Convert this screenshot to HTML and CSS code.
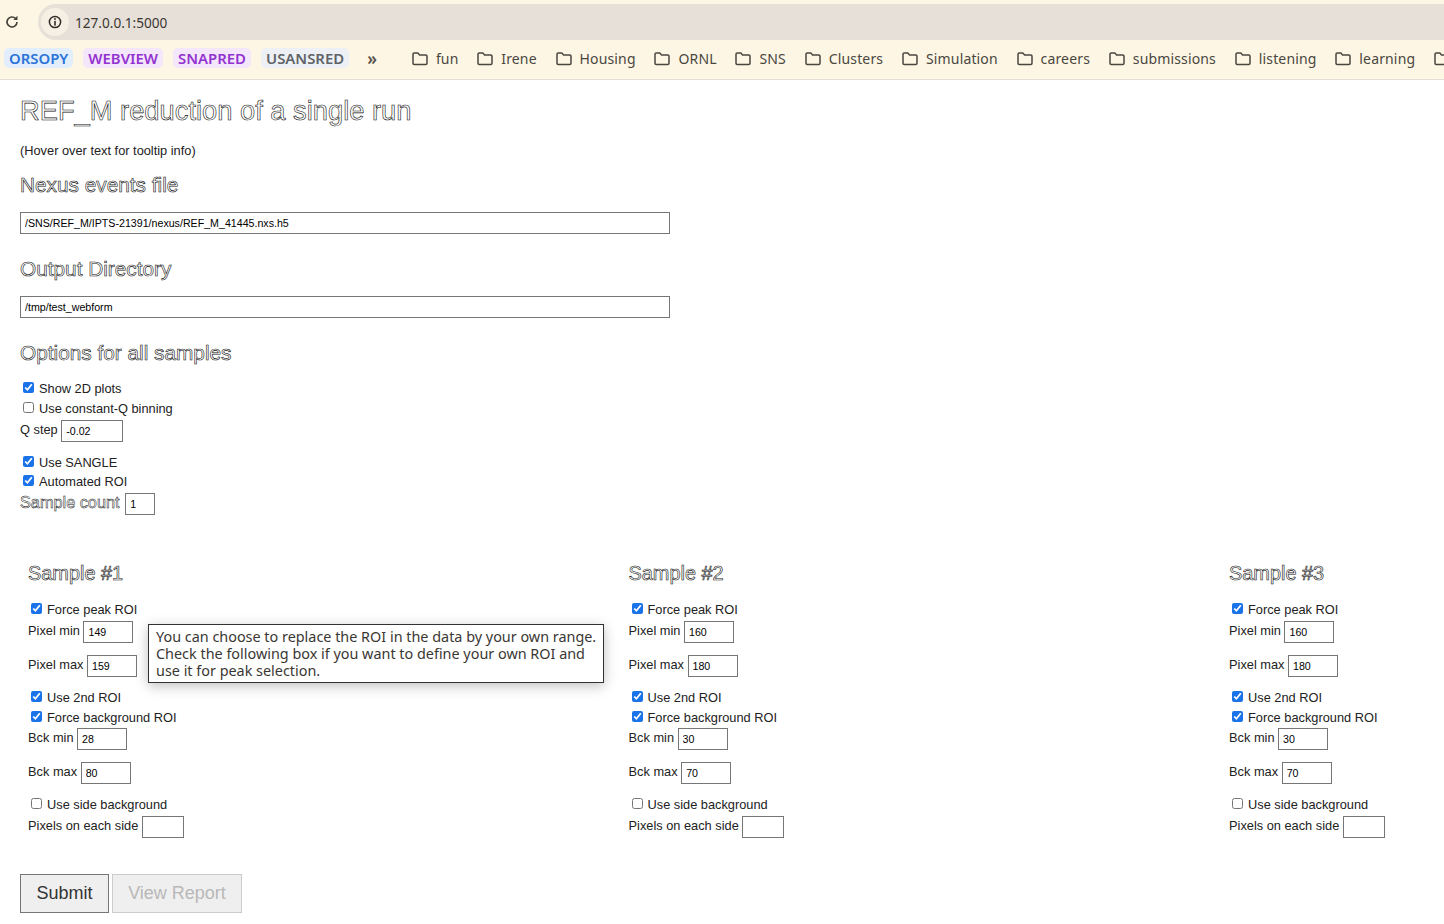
FILE: index.html
```html
<!DOCTYPE html>
<html lang="en">
<head>
    <meta charset="UTF-8">
    <title>REF_M reduction</title>
    <link rel="stylesheet" href="styles.css">
</head>

<body>
    <svg class="icon-defs" width="0" height="0">
        <symbol id="folder" viewBox="0 0 16 16">
            <path d="M1 3.2C1 2.5 1.5 2 2.2 2h3.6l1.8 2h6.2c.7 0 1.2.5 1.2 1.2v7.1c0 .7-.5 1.2-1.2 1.2H2.2c-.7 0-1.2-.5-1.2-1.2z" fill="none" stroke="#4a4640" stroke-width="1.5"/>
        </symbol>
    </svg>

    <header class="browser-bar">
        <div class="address-row">
            <svg class="reload" width="16" height="16" viewBox="0 0 16 16">
                <path d="M13 8a5 5 0 1 1-1.5-3.6" fill="none" stroke="#45423c" stroke-width="1.6"/>
                <path d="M13.5 1.8v4.2H9.3z" fill="#45423c"/>
            </svg>
            <div class="omnibox">
                <span class="site-info">
                    <svg width="14" height="14" viewBox="0 0 14 14">
                        <circle cx="7" cy="7" r="5.6" fill="none" stroke="#2f2c28" stroke-width="1.5"/>
                        <rect x="6.2" y="3.2" width="1.6" height="1.7" fill="#2f2c28"/>
                        <rect x="6.2" y="5.9" width="1.6" height="4.7" fill="#2f2c28"/>
                    </svg>
                </span>
                <span class="url">127.0.0.1:5000</span>
            </div>
        </div>
        <nav class="bookmarks">
            <span class="chip chip-blue">ORSOPY</span>
            <span class="chip chip-purple">WEBVIEW</span>
            <span class="chip chip-purple">SNAPRED</span>
            <span class="chip chip-grey">USANSRED</span>
            <span class="more">»</span>
            <span class="divider"></span>
            <a class="folder"><svg width="16" height="16"><use href="#folder"/></svg>fun</a>
            <a class="folder"><svg width="16" height="16"><use href="#folder"/></svg>Irene</a>
            <a class="folder"><svg width="16" height="16"><use href="#folder"/></svg>Housing</a>
            <a class="folder"><svg width="16" height="16"><use href="#folder"/></svg>ORNL</a>
            <a class="folder"><svg width="16" height="16"><use href="#folder"/></svg>SNS</a>
            <a class="folder"><svg width="16" height="16"><use href="#folder"/></svg>Clusters</a>
            <a class="folder"><svg width="16" height="16"><use href="#folder"/></svg>Simulation</a>
            <a class="folder"><svg width="16" height="16"><use href="#folder"/></svg>careers</a>
            <a class="folder"><svg width="16" height="16"><use href="#folder"/></svg>submissions</a>
            <a class="folder"><svg width="16" height="16"><use href="#folder"/></svg>listening</a>
            <a class="folder"><svg width="16" height="16"><use href="#folder"/></svg>learning</a>
            <a class="folder"><svg width="16" height="16"><use href="#folder"/></svg></a>
        </nav>
    </header>

    <main class="page">
        <h1>REF_M reduction of a single run</h1>
        <p class="hint">(Hover over text for tooltip info)</p>

        <h2 class="file-title">Nexus events file</h2>
        <input class="path" type="text" value="/SNS/REF_M/IPTS-21391/nexus/REF_M_41445.nxs.h5">

        <h2 class="file-title">Output Directory</h2>
        <input class="path" type="text" value="/tmp/test_webform">

        <h2 class="file-title">Options for all samples</h2>
        <div class="options">
            <label class="check"><input type="checkbox" checked>Show 2D plots</label>
            <label class="check"><input type="checkbox">Use constant-Q binning</label>
            <div class="field">Q step <input class="w62" type="text" value="-0.02"></div>
            <label class="check check-gap"><input type="checkbox" checked>Use SANGLE</label>
            <label class="check check-auto"><input type="checkbox" checked>Automated ROI</label>
            <div class="field field-tight"><span class="outlined">Sample count</span> <input class="w30" type="text" value="1"></div>
        </div>

        <section class="samples">
            <div class="sample">
                <h2>Sample #1</h2>
                <label class="check first"><input type="checkbox" checked>Force peak ROI</label>
                <div class="field">Pixel min <input type="text" value="149"></div>
                <div class="field second">Pixel max <input type="text" value="159"></div>
                <label class="check roi2"><input type="checkbox" checked>Use 2nd ROI</label>
                <label class="check"><input type="checkbox" checked>Force background ROI</label>
                <div class="field bck">Bck min <input type="text" value="28"></div>
                <div class="field second">Bck max <input type="text" value="80"></div>
                <label class="check side"><input type="checkbox">Use side background</label>
                <div class="field">Pixels on each side <input class="w42" type="text"></div>
                <div class="tooltip">You can choose to replace the ROI in the data by your own range. Check the following box if you want to define your own ROI and use it for peak selection.</div>
            </div>
            <div class="sample">
                <h2>Sample #2</h2>
                <label class="check first"><input type="checkbox" checked>Force peak ROI</label>
                <div class="field">Pixel min <input type="text" value="160"></div>
                <div class="field second">Pixel max <input type="text" value="180"></div>
                <label class="check roi2"><input type="checkbox" checked>Use 2nd ROI</label>
                <label class="check"><input type="checkbox" checked>Force background ROI</label>
                <div class="field bck">Bck min <input type="text" value="30"></div>
                <div class="field second">Bck max <input type="text" value="70"></div>
                <label class="check side"><input type="checkbox">Use side background</label>
                <div class="field">Pixels on each side <input class="w42" type="text"></div>
            </div>
            <div class="sample">
                <h2>Sample #3</h2>
                <label class="check first"><input type="checkbox" checked>Force peak ROI</label>
                <div class="field">Pixel min <input type="text" value="160"></div>
                <div class="field second">Pixel max <input type="text" value="180"></div>
                <label class="check roi2"><input type="checkbox" checked>Use 2nd ROI</label>
                <label class="check"><input type="checkbox" checked>Force background ROI</label>
                <div class="field bck">Bck min <input type="text" value="30"></div>
                <div class="field second">Bck max <input type="text" value="70"></div>
                <label class="check side"><input type="checkbox">Use side background</label>
                <div class="field">Pixels on each side <input class="w42" type="text"></div>
            </div>
        </section>

        <div class="actions">
            <button class="submit" type="button">Submit</button>
            <button class="report" type="button" disabled>View Report</button>
        </div>
    </main>
</body>
</html>
```

FILE: styles.css
```css
html, body {
    overflow: hidden;
}

body {
    margin: 0;
    height: 924px;
    font-family: "Liberation Sans", Arial, sans-serif;
    font-size: 12.8px;
    color: #222;
    background: #fff;
}

.icon-defs {
    position: absolute;
}

/* browser chrome */
.browser-bar {
    height: 79px;
    background: #fdf6e4;
    border-bottom: 1px solid #e3dfd6;
    font-family: "Noto Sans", sans-serif;
    overflow: hidden;
}

.address-row {
    display: flex;
    align-items: center;
    height: 40px;
    padding: 4px 0 0 4px;
    box-sizing: border-box;
}

.reload {
    flex: none;
}

.omnibox {
    display: flex;
    align-items: center;
    flex: 1;
    height: 36px;
    margin-left: 18px;
    background: #e6e0d8;
    border-radius: 18px 0 0 18px;
}

.site-info {
    display: flex;
    align-items: center;
    justify-content: center;
    width: 28px;
    height: 28px;
    margin-left: 3px;
    border-radius: 50%;
    background: #f6f0e4;
}

.url {
    margin-left: 6px;
    font-size: 13.6px;
    color: #3a3733;
}

.bookmarks {
    display: flex;
    align-items: center;
    height: 37px;
    padding-left: 4px;
    white-space: nowrap;
}

.chip {
    padding: 0 5px;
    margin: 0 10px 2px 0;
    border-radius: 5px;
    font-size: 14.9px;
    line-height: 20px;
    font-weight: 600;
}

.chip-blue {
    color: #2b74d8;
    background: #e2eefb;
}

.chip-purple {
    color: #9333d0;
    background: #f4e6fb;
}

.chip-grey {
    color: #5f6368;
    background: #edf1f5;
}

.more {
    margin-left: 8px;
    font-size: 17px;
    font-weight: 600;
    color: #55514a;
}

.divider {
    width: 1px;
    height: 16px;
    margin: 0 17px 0 18px;
    background: #f0d48e;
}

.folder {
    display: flex;
    align-items: center;
    gap: 8px;
    margin-right: 18.8px;
    font-size: 14px;
    letter-spacing: 0.15px;
    color: #4a4640;
}

/* page */
.page {
    padding-left: 20px;
}

h1, h2 {
    margin: 0;
    font-weight: normal;
    color: #fff;
    -webkit-text-stroke: 0.6px #111;
}

h1 {
    padding-top: 15px;
    font-size: 27.3px;
    line-height: 32px;
}

h2 {
    font-size: 19.9px;
    line-height: 22px;
}

.hint {
    margin: 16px 0 0;
    line-height: 16px;
}

h2.file-title {
    margin: 15px 0 16px;
    font-size: 20.8px;
}

input[type="text"] {
    box-sizing: border-box;
    width: 50px;
    height: 22px;
    padding: 0 4px;
    border: 1px solid #767676;
    border-radius: 0;
    font-family: "Liberation Sans", Arial, sans-serif;
    font-size: 10.65px;
    vertical-align: middle;
}

input.path {
    display: block;
    width: 650px;
    margin-bottom: 24px;
}

input.w62 {
    width: 62px;
}

input.w30 {
    width: 30px;
    margin: 0 0 2px 2px;
}

input.w42 {
    width: 42px;
}

.check {
    display: block;
    height: 20px;
    line-height: 20px;
    padding-left: 3px;
}

.check input {
    width: 11px;
    height: 11px;
    margin: 0 5px 0 0;
    accent-color: #1a73e8;
    vertical-align: 0;
}

.options {
    margin-top: -1px;
}

.field {
    height: 22px;
    line-height: 22px;
}

.check-gap {
    margin-top: 12px;
}

.check-auto {
    margin-top: -1px;
}

.field-tight {
    margin-top: -1px;
}

.outlined {
    font-size: 16.3px;
    color: #fff;
    -webkit-text-stroke: 0.5px #111;
}

.samples {
    display: grid;
    grid-template-columns: 600.5px 600.5px 1fr;
    margin-top: 49px;
    padding-left: 8px;
}

.sample {
    position: relative;
}

.sample .first {
    margin-top: 16px;
}

.sample .second {
    margin-top: 12px;
}

.sample .roi2 {
    margin-top: 12px;
}

.sample .bck {
    margin-top: -1px;
}

.sample .side {
    margin-top: 12px;
}

.tooltip {
    position: absolute;
    top: 62px;
    left: 120px;
    width: 456px;
    box-sizing: border-box;
    padding: 3px 0 3px 7px;
    background: #fff;
    border: 1px solid #333;
    box-shadow: 0 3px 12px rgba(0, 0, 0, 0.25);
    font-family: "Noto Sans", sans-serif;
    font-size: 14.4px;
    line-height: 17px;
    color: #3a3733;
}

.actions {
    display: flex;
    gap: 3px;
    margin-top: 37px;
}

.actions button {
    height: 39px;
    border-radius: 0;
    font-family: "Liberation Sans", Arial, sans-serif;
    font-size: 18px;
}

.submit {
    width: 89px;
    background: #efefef;
    border: 1px solid #767676;
    color: #333;
}

.report {
    width: 130px;
    background: #efefef;
    border: 1px solid #ccc;
    color: #b8b8b8;
}
```
